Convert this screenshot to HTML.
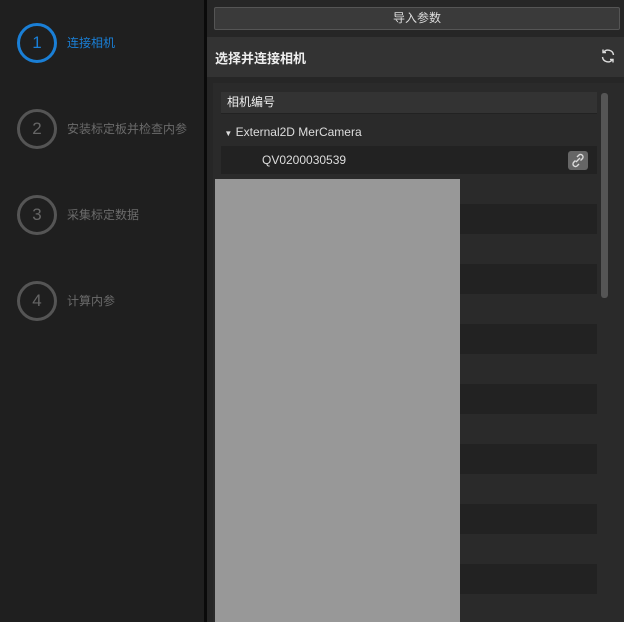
<!DOCTYPE html>
<html><head><meta charset="utf-8"><style>
body{margin:0;width:624px;height:622px;overflow:hidden;background:#262626;font-family:"Liberation Sans","Noto Sans CJK SC",sans-serif;position:relative}
.side{position:absolute;left:0;top:0;width:204px;height:622px;background:#1f1f1f}
.div{position:absolute;left:204px;top:0;width:3px;height:622px;background:#0a0a0a}
.step{position:absolute;left:17px;width:34px;height:34px;border:3px solid #555;border-radius:50%;color:#666;font-size:17px;text-align:center;line-height:34px}
.lbl{position:absolute;left:67px;font-size:12px;color:#6b6b6b}
.btn{position:absolute;left:214px;top:7px;width:404px;height:21px;background:#3a3a3a;border:1px solid #555;border-radius:2px;color:#ddd;font-size:12px;text-align:center;line-height:21px}
.hdr{position:absolute;left:207px;top:37px;width:417px;height:40px;background:#333}
.hdr span{position:absolute;left:8px;top:11px;color:#eee;font-weight:bold;font-size:13px}
.panel{position:absolute;left:213px;top:83px;width:411px;height:539px;background:#2a2a2a}
.row{position:absolute;left:221px;width:376px;height:30px;font-size:12px;color:#ddd;line-height:30px}
.dk{background:#222}
.blur{position:absolute;left:215px;top:179px;width:245px;height:443px;background:#989898}
</style></head><body>
<div class="side"></div><div class="div"></div>
<div class="step" style="top:23px;border-color:#1a7fd6;color:#1a7fd6">1</div><div class="lbl" style="top:34px;color:#1a7fd6">连接相机</div>
<div class="step" style="top:109px">2</div><div class="lbl" style="top:120px">安装标定板并检查内参</div>
<div class="step" style="top:195px">3</div><div class="lbl" style="top:206px">采集标定数据</div>
<div class="step" style="top:281px">4</div><div class="lbl" style="top:292px">计算内参</div>
<div class="btn">导入参数</div>
<div class="hdr"><span>选择并连接相机</span>
<svg style="position:absolute;left:393px;top:11px" width="16" height="16" viewBox="0 0 16 16" fill="none" stroke="#ddd" stroke-width="1.4"><path d="M13.5 7A5.5 5.5 0 0 0 3.5 4.5M2.5 9a5.5 5.5 0 0 0 10 2.5"/><path d="M3 1.5v3h3M13 14.5v-3h-3"/></svg></div>
<div class="panel"></div>
<div style="position:absolute;left:221px;top:92px;width:376px;height:21px;background:#333;border-bottom:1px solid #222;color:#eee;font-size:12px;line-height:21px;text-indent:6px">相机编号</div>
<div style="position:absolute;left:601px;top:93px;width:7px;height:205px;background:#555;border-radius:3px"></div>
<div class="row" style="top:117px">&nbsp;<span style="font-size:8px">▼</span> External2D MerCamera</div>
<div class="row dk" style="top:146px;height:28px;line-height:28px"><span style="margin-left:41px">QV0200030539</span>
<div style="position:absolute;left:347px;top:5px;width:20px;height:19px;background:#666;border-radius:3px"><svg width="20" height="19" viewBox="0 0 20 19" fill="none" stroke="#ddd" stroke-width="1.4"><path d="M9 6l2-2a2.5 2.5 0 0 1 3.5 3.5l-2 2M11 13l-2 2a2.5 2.5 0 0 1-3.5-3.5l2-2M8 11l4-4"/></svg></div></div>
<div class="row dk" style="top:204px"></div><div class="row dk" style="top:264px"></div><div class="row dk" style="top:324px"></div><div class="row dk" style="top:384px"></div><div class="row dk" style="top:444px"></div><div class="row dk" style="top:504px"></div><div class="row dk" style="top:564px"></div>
<div class="blur"></div>
</body></html>
